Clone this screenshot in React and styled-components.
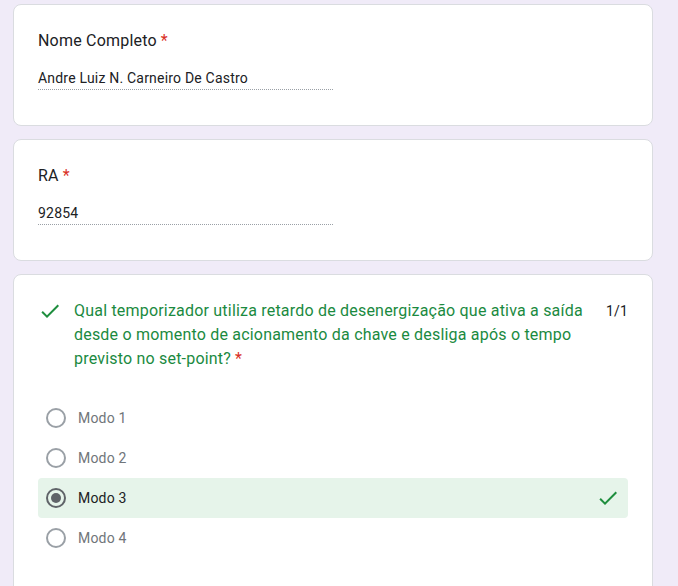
import React from 'react';
import styled, { createGlobalStyle } from 'styled-components';

const GlobalStyles = createGlobalStyle`
  html, body {
    margin: 0;
    padding: 0;
    background-color: #f0ebf8;
  }
  *, *:before, *:after {
    box-sizing: border-box;
  }
  body {
    font-family: Roboto, "Liberation Sans", Arial, sans-serif;
    color: #202124;
  }
`;

const Page = styled.div`
  display: flex;
  flex-direction: column;
  gap: 13px;
  padding: 4px 0 0 13px;
  width: 653px;
`;

const Card = styled.div`
  background-color: #fff;
  border: 1px solid #dadce0;
  border-radius: 8px;
  padding: 24px;
  padding-bottom: ${props => props.$pb || '24px'};
`;

const Title = styled.div`
  font-size: 16px;
  line-height: 24px;
  letter-spacing: 0.2px;
  color: #202124;
`;

const Star = styled.span`
  color: #d93025;
  margin-left: 4px;
`;

const Field = styled.div`
  margin-top: 15px;
  margin-bottom: 11px;
  width: 295px;
  font-size: 14px;
  line-height: 20px;
  letter-spacing: 0.2px;
  padding-bottom: 1px;
  border-bottom: 1px dotted #9aa0a6;
  color: #202124;
`;

const QuestionHead = styled.div`
  display: flex;
  align-items: flex-start;
`;

const IconBox = styled.div`
  width: 24px;
  height: 24px;
  flex-shrink: 0;
  margin-right: 12px;
  display: flex;
`;

const QuestionText = styled.div`
  flex: 1;
  font-size: 16px;
  line-height: 24px;
  letter-spacing: 0.2px;
  color: #1b8a3f;
`;

const Score = styled.div`
  margin-left: 16px;
  font-size: 14px;
  line-height: 24px;
  letter-spacing: 0.2px;
  color: #202124;
`;

const Options = styled.div`
  margin-top: 27px;
  display: flex;
  flex-direction: column;
`;

const Option = styled.div`
  height: 40px;
  display: flex;
  align-items: center;
  padding: 0 8px;
  border-radius: 4px;
  background-color: ${props => (props.$correct ? '#e6f4ea' : 'transparent')};
`;

const Radio = styled.div`
  width: 20px;
  height: 20px;
  border-radius: 50%;
  border: 2px solid ${props => (props.$checked ? '#5f6368' : '#9aa0a6')};
  display: flex;
  align-items: center;
  justify-content: center;
  flex-shrink: 0;
  margin-right: 12px;

  &::after {
    content: '';
    width: 10px;
    height: 10px;
    border-radius: 50%;
    background-color: #5f6368;
    display: ${props => (props.$checked ? 'block' : 'none')};
  }
`;

const OptionLabel = styled.span`
  flex: 1;
  font-size: 14px;
  letter-spacing: 0.2px;
  color: ${props => (props.$checked ? '#202124' : '#70757a')};
`;

function Check({ size = 24 }) {
  return (
    <svg width={size} height={size} viewBox="0 0 24 24">
      <path fill="#1e8e3e" d="M9 16.17L4.83 12l-1.42 1.41L9 19 21 7l-1.41-1.41z" />
    </svg>
  );
}

const options = ['Modo 1', 'Modo 2', 'Modo 3', 'Modo 4'];

export default function App() {
  return (
    <>
      <GlobalStyles />
      <Page>
        <Card>
          <Title>
            Nome Completo<Star>*</Star>
          </Title>
          <Field>Andre Luiz N. Carneiro De Castro</Field>
        </Card>

        <Card>
          <Title>
            RA<Star>*</Star>
          </Title>
          <Field>92854</Field>
        </Card>

        <Card $pb="40px">
          <QuestionHead>
            <IconBox>
              <Check />
            </IconBox>
            <QuestionText>
              Qual temporizador utiliza retardo de desenergização que ativa a saída
              desde o momento de acionamento da chave e desliga após o tempo
              previsto no set-point?<Star>*</Star>
            </QuestionText>
            <Score>1/1</Score>
          </QuestionHead>
          <Options>
            {options.map(opt => {
              const checked = opt === 'Modo 3';
              return (
                <Option key={opt} $correct={checked}>
                  <Radio $checked={checked} />
                  <OptionLabel $checked={checked}>{opt}</OptionLabel>
                  {checked ? <Check /> : null}
                </Option>
              );
            })}
          </Options>
        </Card>
      </Page>
    </>
  );
}
